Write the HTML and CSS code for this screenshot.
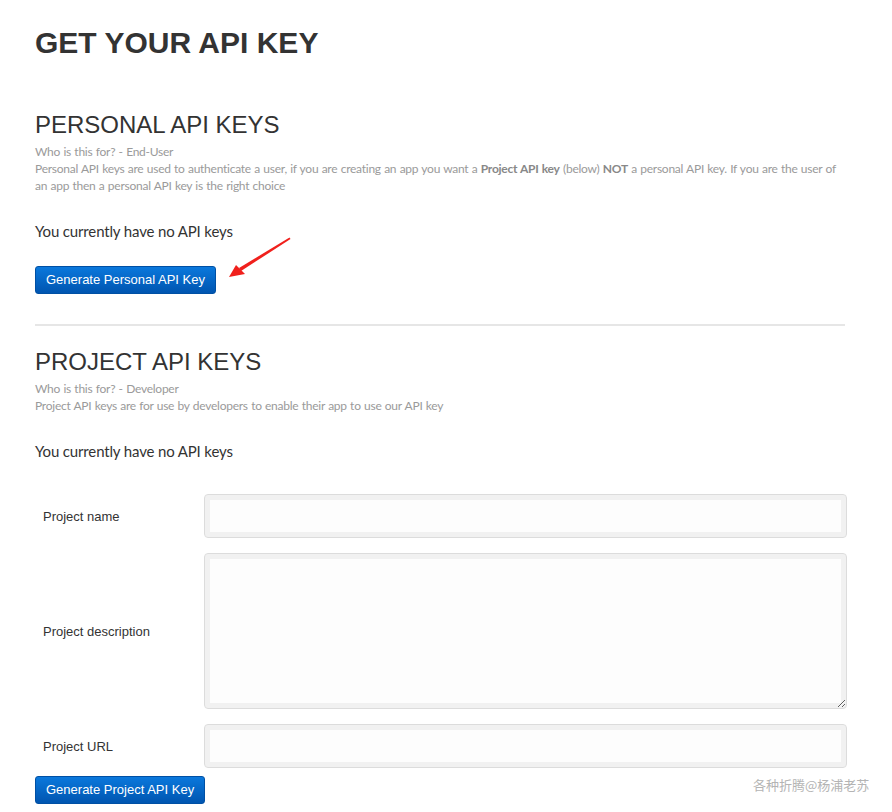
FILE: index.html
```html
<!DOCTYPE html>
<html>
<head>
<meta charset="utf-8">
<link rel="stylesheet" href="styles.css">
</head>
<body>
<div class="page">
  <h1 class="title">GET YOUR API KEY</h1>

  <section class="section section-personal">
    <h2 class="section-title">PERSONAL API KEYS</h2>
    <div class="hint">
      <p>Who is this for? - End-User</p>
      <p>Personal API keys are used to authenticate a user, if you are creating an app you want a <b>Project API key</b> (below) <b>NOT</b> a personal API key. If you are the user of an app then a personal API key is the right choice</p>
    </div>
    <p class="status">You currently have no API keys</p>
    <button class="btn">Generate Personal API Key</button>
  </section>

  <hr class="divider">

  <section class="section">
    <h2 class="section-title">PROJECT API KEYS</h2>
    <div class="hint">
      <p>Who is this for? - Developer</p>
      <p>Project API keys are for use by developers to enable their app to use our API key</p>
    </div>
    <p class="status">You currently have no API keys</p>

    <form class="form">
      <div class="row">
        <label class="label">Project name</label>
        <input class="field" type="text">
      </div>
      <div class="row">
        <label class="label">Project description</label>
        <textarea class="field area"></textarea>
      </div>
      <div class="row">
        <label class="label">Project URL</label>
        <input class="field" type="text">
      </div>
      <button class="btn btn-project" type="button">Generate Project API Key</button>
    </form>
  </section>
</div>

<svg class="arrow" width="70" height="50" viewBox="0 0 70 50">
  <polygon points="64.5,3.5 65.5,5 16,37 14,34" fill="#f0201c"/>
  <polygon points="4,43 11,31 20,40" fill="#f0201c"/>
</svg>

<div class="watermark">各种折腾@杨浦老苏</div>
</body>
</html>
```

FILE: styles.css
```css
html, body {
  margin: 0;
  padding: 0;
  background: #fff;
}

body {
  position: relative;
  width: 892px;
  height: 812px;
  overflow: hidden;
  font-family: "Liberation Sans", Arial, sans-serif;
  color: #333;
}

.page {
  width: 812px;
  padding: 23px 0 0 35px;
}

.title {
  margin: 0;
  font-size: 30px;
  line-height: 40px;
  font-weight: bold;
  color: #333;
}

.section-personal {
  margin-top: 49px;
}

.section-title {
  margin: 0;
  font-size: 24px;
  line-height: 26px;
  font-weight: normal;
  color: #333;
}

.hint {
  max-width: 810px;
  margin-top: 5px;
  font-family: Lato, "Open Sans", sans-serif;
  font-size: 12px;
  line-height: 17px;
  letter-spacing: -0.25px;
  word-spacing: 0.5px;
  color: #9a9a9a;
}

.hint p {
  margin: 0;
}

.hint b {
  color: #888;
}

.status {
  margin: 27px 0 0;
  font-family: Lato, "Open Sans", sans-serif;
  font-size: 15px;
  line-height: 20px;
  letter-spacing: -0.15px;
  color: #333;
}

.btn {
  display: block;
  align-self: flex-start;
  margin-top: 25px;
  height: 28px;
  padding: 0 10px;
  border: 1px solid #0050a4;
  border-radius: 3px;
  background: linear-gradient(#0a78dc, #0055b0);
  color: #fff;
  font-family: "Liberation Sans", Arial, sans-serif;
  font-size: 13px;
  line-height: 26px;
}

.divider {
  margin: 30px 0 0;
  width: 810px;
  height: 2px;
  border: 0;
  background: #e6e6e6;
}

.divider + .section {
  margin-top: 23px;
}

.form {
  margin-top: 33px;
  display: flex;
  flex-direction: column;
  gap: 15px;
}

.row {
  display: flex;
  align-items: center;
}

.label {
  width: 161px;
  padding-left: 8px;
  font-size: 13px;
  color: #333;
}

.field {
  flex: 1;
  box-sizing: border-box;
  height: 44px;
  margin: 0;
  border: 1px solid #dcdcdc;
  border-radius: 4px;
  box-shadow: inset 0 0 0 5px #f1f1f1;
  background: #fdfdfd;
  padding: 6px 10px;
  font-family: "Liberation Sans", Arial, sans-serif;
  font-size: 14px;
}

.area {
  height: 156px;
  resize: vertical;
}

.btn-project {
  margin-top: -7px;
}

.arrow {
  position: absolute;
  left: 225px;
  top: 234px;
}

.watermark {
  position: absolute;
  left: 753px;
  top: 776px;
  font-family: "Noto Sans CJK SC", sans-serif;
  font-size: 13px;
  line-height: 18px;
  color: #b4b4b4;
}
```
